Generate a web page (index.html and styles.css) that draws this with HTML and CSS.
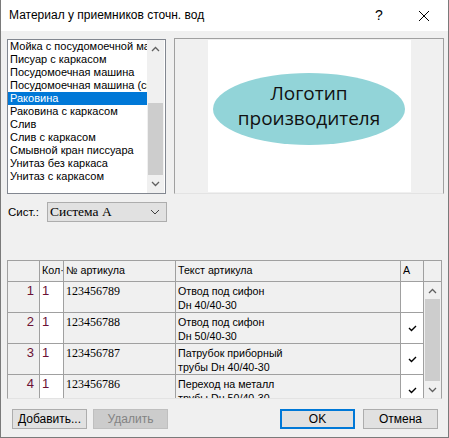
FILE: index.html
```html
<!DOCTYPE html>
<html>

<head>
    <title>Материал у приемников сточн. вод</title>
    <link rel="stylesheet" href="styles.css">
</head>

<body>
    <div class="window">
        <div class="titlebar">
            <span class="title">Материал у приемников сточн. вод</span>
            <span class="tb-btn help">?</span>
            <span class="tb-btn close">
                <svg width="12" height="12" viewBox="0 0 12 12">
                    <path d="M1 1 L11 11 M11 1 L1 11" stroke="#000" stroke-width="1" fill="none"/>
                </svg>
            </span>
        </div>

        <div class="content">
            <div class="top">
                <div class="listbox">
                    <ul class="items">
                        <li>Мойка с посудомоечной машиной</li>
                        <li>Писуар с каркасом</li>
                        <li>Посудомоечная машина</li>
                        <li>Посудомоечная машина (скрытая)</li>
                        <li class="selected">Раковина</li>
                        <li>Раковина с каркасом</li>
                        <li>Слив</li>
                        <li>Слив с каркасом</li>
                        <li>Смывной кран писсуара</li>
                        <li>Унитаз без каркаса</li>
                        <li>Унитаз с каркасом</li>
                    </ul>
                    <div class="vscroll list-scroll">
                        <div class="arrow">
                            <svg width="9" height="6" viewBox="0 0 9 6"><path d="M1 5 L4.5 1.5 L8 5" stroke="#606060" stroke-width="1.3" fill="none"/></svg>
                        </div>
                        <div class="track"></div>
                        <div class="thumb list-thumb"></div>
                        <div class="arrow">
                            <svg width="9" height="6" viewBox="0 0 9 6"><path d="M1 1 L4.5 4.5 L8 1" stroke="#606060" stroke-width="1.3" fill="none"/></svg>
                        </div>
                    </div>
                </div>

                <div class="preview">
                    <svg class="logo" width="203" height="152" viewBox="0 0 203 152">
                        <rect width="203" height="152" fill="#fff"/>
                        <ellipse cx="101" cy="69" rx="96" ry="36" fill="#92d4d8"/>
                        <text x="101" y="60" text-anchor="middle" class="logo-text">Логотип</text>
                        <text x="101" y="85" text-anchor="middle" class="logo-text">производителя</text>
                    </svg>
                </div>
            </div>

            <div class="sys-row">
                <span class="sys-label">Сист.:</span>
                <div class="combo">
                    <span class="combo-value">Система A</span>
                    <svg width="10" height="6" viewBox="0 0 10 6"><path d="M1 1 L5 5 L9 1" stroke="#404040" stroke-width="1" fill="none"/></svg>
                </div>
            </div>

            <div class="grid">
                <div class="grid-head">
                    <div class="hcell"></div>
                    <div class="hcell">Кол·</div>
                    <div class="hcell">№ артикула</div>
                    <div class="hcell">Текст артикула</div>
                    <div class="hcell">A</div>
                    <div class="hcell corner"></div>
                </div>
                <div class="grid-body">
                    <div class="rows">
                        <div class="row">
                            <div class="cell num">1</div>
                            <div class="cell qty">1</div>
                            <div class="cell art">123456789</div>
                            <div class="cell txt">Отвод под сифон<br>Dн 40/40-30</div>
                            <div class="cell chk"></div>
                        </div>
                        <div class="row">
                            <div class="cell num">2</div>
                            <div class="cell qty">1</div>
                            <div class="cell art">123456788</div>
                            <div class="cell txt">Отвод под сифон<br>Dн 50/40-30</div>
                            <div class="cell chk"><svg width="9" height="7" viewBox="0 0 9 7"><path d="M1 3 L3.5 5.5 L8 1" stroke="#000" stroke-width="1.4" fill="none"/></svg></div>
                        </div>
                        <div class="row">
                            <div class="cell num">3</div>
                            <div class="cell qty">1</div>
                            <div class="cell art">123456787</div>
                            <div class="cell txt">Патрубок приборный<br>трубы Dн 40/40-30</div>
                            <div class="cell chk"><svg width="9" height="7" viewBox="0 0 9 7"><path d="M1 3 L3.5 5.5 L8 1" stroke="#000" stroke-width="1.4" fill="none"/></svg></div>
                        </div>
                        <div class="row">
                            <div class="cell num">4</div>
                            <div class="cell qty">1</div>
                            <div class="cell art">123456786</div>
                            <div class="cell txt">Переход на металл<br>трубы Dн 50/40-30</div>
                            <div class="cell chk"><svg width="9" height="7" viewBox="0 0 9 7"><path d="M1 3 L3.5 5.5 L8 1" stroke="#000" stroke-width="1.4" fill="none"/></svg></div>
                        </div>
                    </div>
                    <div class="vscroll grid-scroll">
                        <div class="arrow">
                            <svg width="9" height="6" viewBox="0 0 9 6"><path d="M1 5 L4.5 1.5 L8 5" stroke="#606060" stroke-width="1.3" fill="none"/></svg>
                        </div>
                        <div class="thumb grid-thumb"></div>
                        <div class="arrow">
                            <svg width="9" height="6" viewBox="0 0 9 6"><path d="M1 1 L4.5 4.5 L8 1" stroke="#606060" stroke-width="1.3" fill="none"/></svg>
                        </div>
                    </div>
                </div>
            </div>

            <div class="buttons">
                <button class="btn">Добавить...</button>
                <button class="btn" disabled>Удалить</button>
                <span class="spacer"></span>
                <button class="btn default">OK</button>
                <button class="btn">Отмена</button>
            </div>
        </div>
    </div>
</body>

</html>
```

FILE: styles.css
```css
body {
    margin: 0;
    font-family: "Liberation Sans", Arial, sans-serif;
    font-size: 12px;
    color: #000;
}

.window {
    width: 449px;
    height: 438px;
    box-sizing: border-box;
    border: 1px solid #7a7a7a;
    border-top: none;
    background: #f0f0f0;
    display: flex;
    flex-direction: column;
}

/* title bar */

.titlebar {
    height: 31px;
    background: #fff;
    display: flex;
    align-items: center;
}

.title {
    flex: 1;
    padding-left: 8px;
    font-size: 12px;
    padding-bottom: 1px;
}

.tb-btn {
    width: 46px;
    height: 31px;
    display: flex;
    align-items: center;
    justify-content: center;
}

.help {
    font-size: 14px;
    padding-bottom: 2px;
    box-sizing: border-box;
}

.close svg {
    display: block;
    margin-left: -2px;
}

.content {
    flex: 1;
    padding: 7px 0 0 6px;
}

/* list + preview */

.top {
    display: flex;
    align-items: flex-start;
}

.listbox {
    margin-top: 1px;
    width: 159px;
    height: 155px;
    box-sizing: border-box;
    border: 1px solid #828790;
    background: #fff;
    display: flex;
    font-size: 11px;
}

.items {
    list-style: none;
    margin: 0;
    padding: 0;
    width: 139px;
    overflow: hidden;
}

.items li {
    height: 13px;
    line-height: 13px;
    padding-left: 2px;
    white-space: nowrap;
    overflow: hidden;
}

.items li.selected {
    background: #0078d7;
    color: #fff;
}

.vscroll {
    width: 17px;
    background: #f0f0f0;
    display: flex;
    flex-direction: column;
}

.vscroll .arrow {
    height: 17px;
    display: flex;
    align-items: center;
    justify-content: center;
}

.vscroll .track {
    height: 46px;
}

.thumb {
    background: #cdcdcd;
    margin: 0 1px;
}

.list-thumb {
    height: 72px;
}

.grid-thumb {
    height: 82px;
}

.preview {
    margin-left: 8px;
    width: 270px;
    height: 156px;
    box-sizing: border-box;
    border: 1px solid #a0a0a0;
    border-bottom-color: #e3e3e3;
    display: flex;
    justify-content: center;
    padding-top: 1px;
}

.logo {
    display: block;
}

.logo-text {
    font-family: "Open Sans", sans-serif;
    font-size: 19px;
    fill: #111;
}

/* system selector */

.sys-row {
    display: flex;
    align-items: center;
    margin-top: 8px;
}

.sys-label {
    width: 39px;
    padding-left: 1px;
    font-size: 11.5px;
}

.combo {
    width: 120px;
    height: 20px;
    box-sizing: border-box;
    border: 1px solid #adadad;
    background: #e1e1e1;
    display: flex;
    align-items: center;
    padding: 0 6px 0 2px;
}

.combo-value {
    flex: 1;
    font-family: "Liberation Serif", "Times New Roman", serif;
    font-size: 13.5px;
}

/* grid */

.grid {
    margin-top: 38px;
    width: 435px;
    box-sizing: border-box;
    border: 1px solid #a0a0a0;
    border-bottom-color: #e3e3e3;
    font-size: 10.7px;
}

.grid-head {
    display: grid;
    grid-template-columns: 32px 24px 112px 225px 23px 17px;
    height: 20px;
    border-bottom: 1px solid #a0a0a0;
}

.hcell {
    border-right: 1px solid #a0a0a0;
    line-height: 19px;
    padding-left: 2px;
    white-space: nowrap;
    overflow: hidden;
}

.hcell.corner {
    border-right: none;
}

.grid-body {
    display: flex;
    height: 116px;
}

.rows {
    width: 416px;
    overflow: hidden;
}

.row {
    display: grid;
    grid-template-columns: 32px 24px 112px 225px 23px;
    height: 31px;
    box-sizing: border-box;
    border-bottom: 1px solid #a0a0a0;
}

.cell {
    border-right: 1px solid #a0a0a0;
    line-height: 14px;
    padding: 2px 0 0 2px;
    white-space: nowrap;
    overflow: hidden;
}

.num {
    text-align: right;
    padding-right: 5px;
    color: #6a1035;
    font-size: 13px;
}

.qty {
    background: #fff;
    color: #6a1035;
    font-size: 13px;
}

.art {
    font-family: "Liberation Serif", "Times New Roman", serif;
    font-size: 12px;
}

.chk {
    background: #fff;
    padding: 0;
    display: flex;
    align-items: center;
    justify-content: center;
}

/* buttons */

.buttons {
    display: flex;
    margin-top: 10px;
    padding-left: 5px;
    padding-right: 4px;
}

.btn {
    width: 75px;
    height: 20px;
    box-sizing: border-box;
    border: 1px solid #adadad;
    background: #e1e1e1;
    font-family: "Liberation Sans", Arial, sans-serif;
    font-size: 12px;
    color: #000;
    padding: 0;
    margin-right: 6px;
}

.btn:disabled {
    background: #cccccc;
    border-color: #bfbfbf;
    color: #838383;
}

.btn.default {
    border: 2px solid #0078d7;
    margin-right: 8px;
}

.spacer {
    flex: 1;
}
```
